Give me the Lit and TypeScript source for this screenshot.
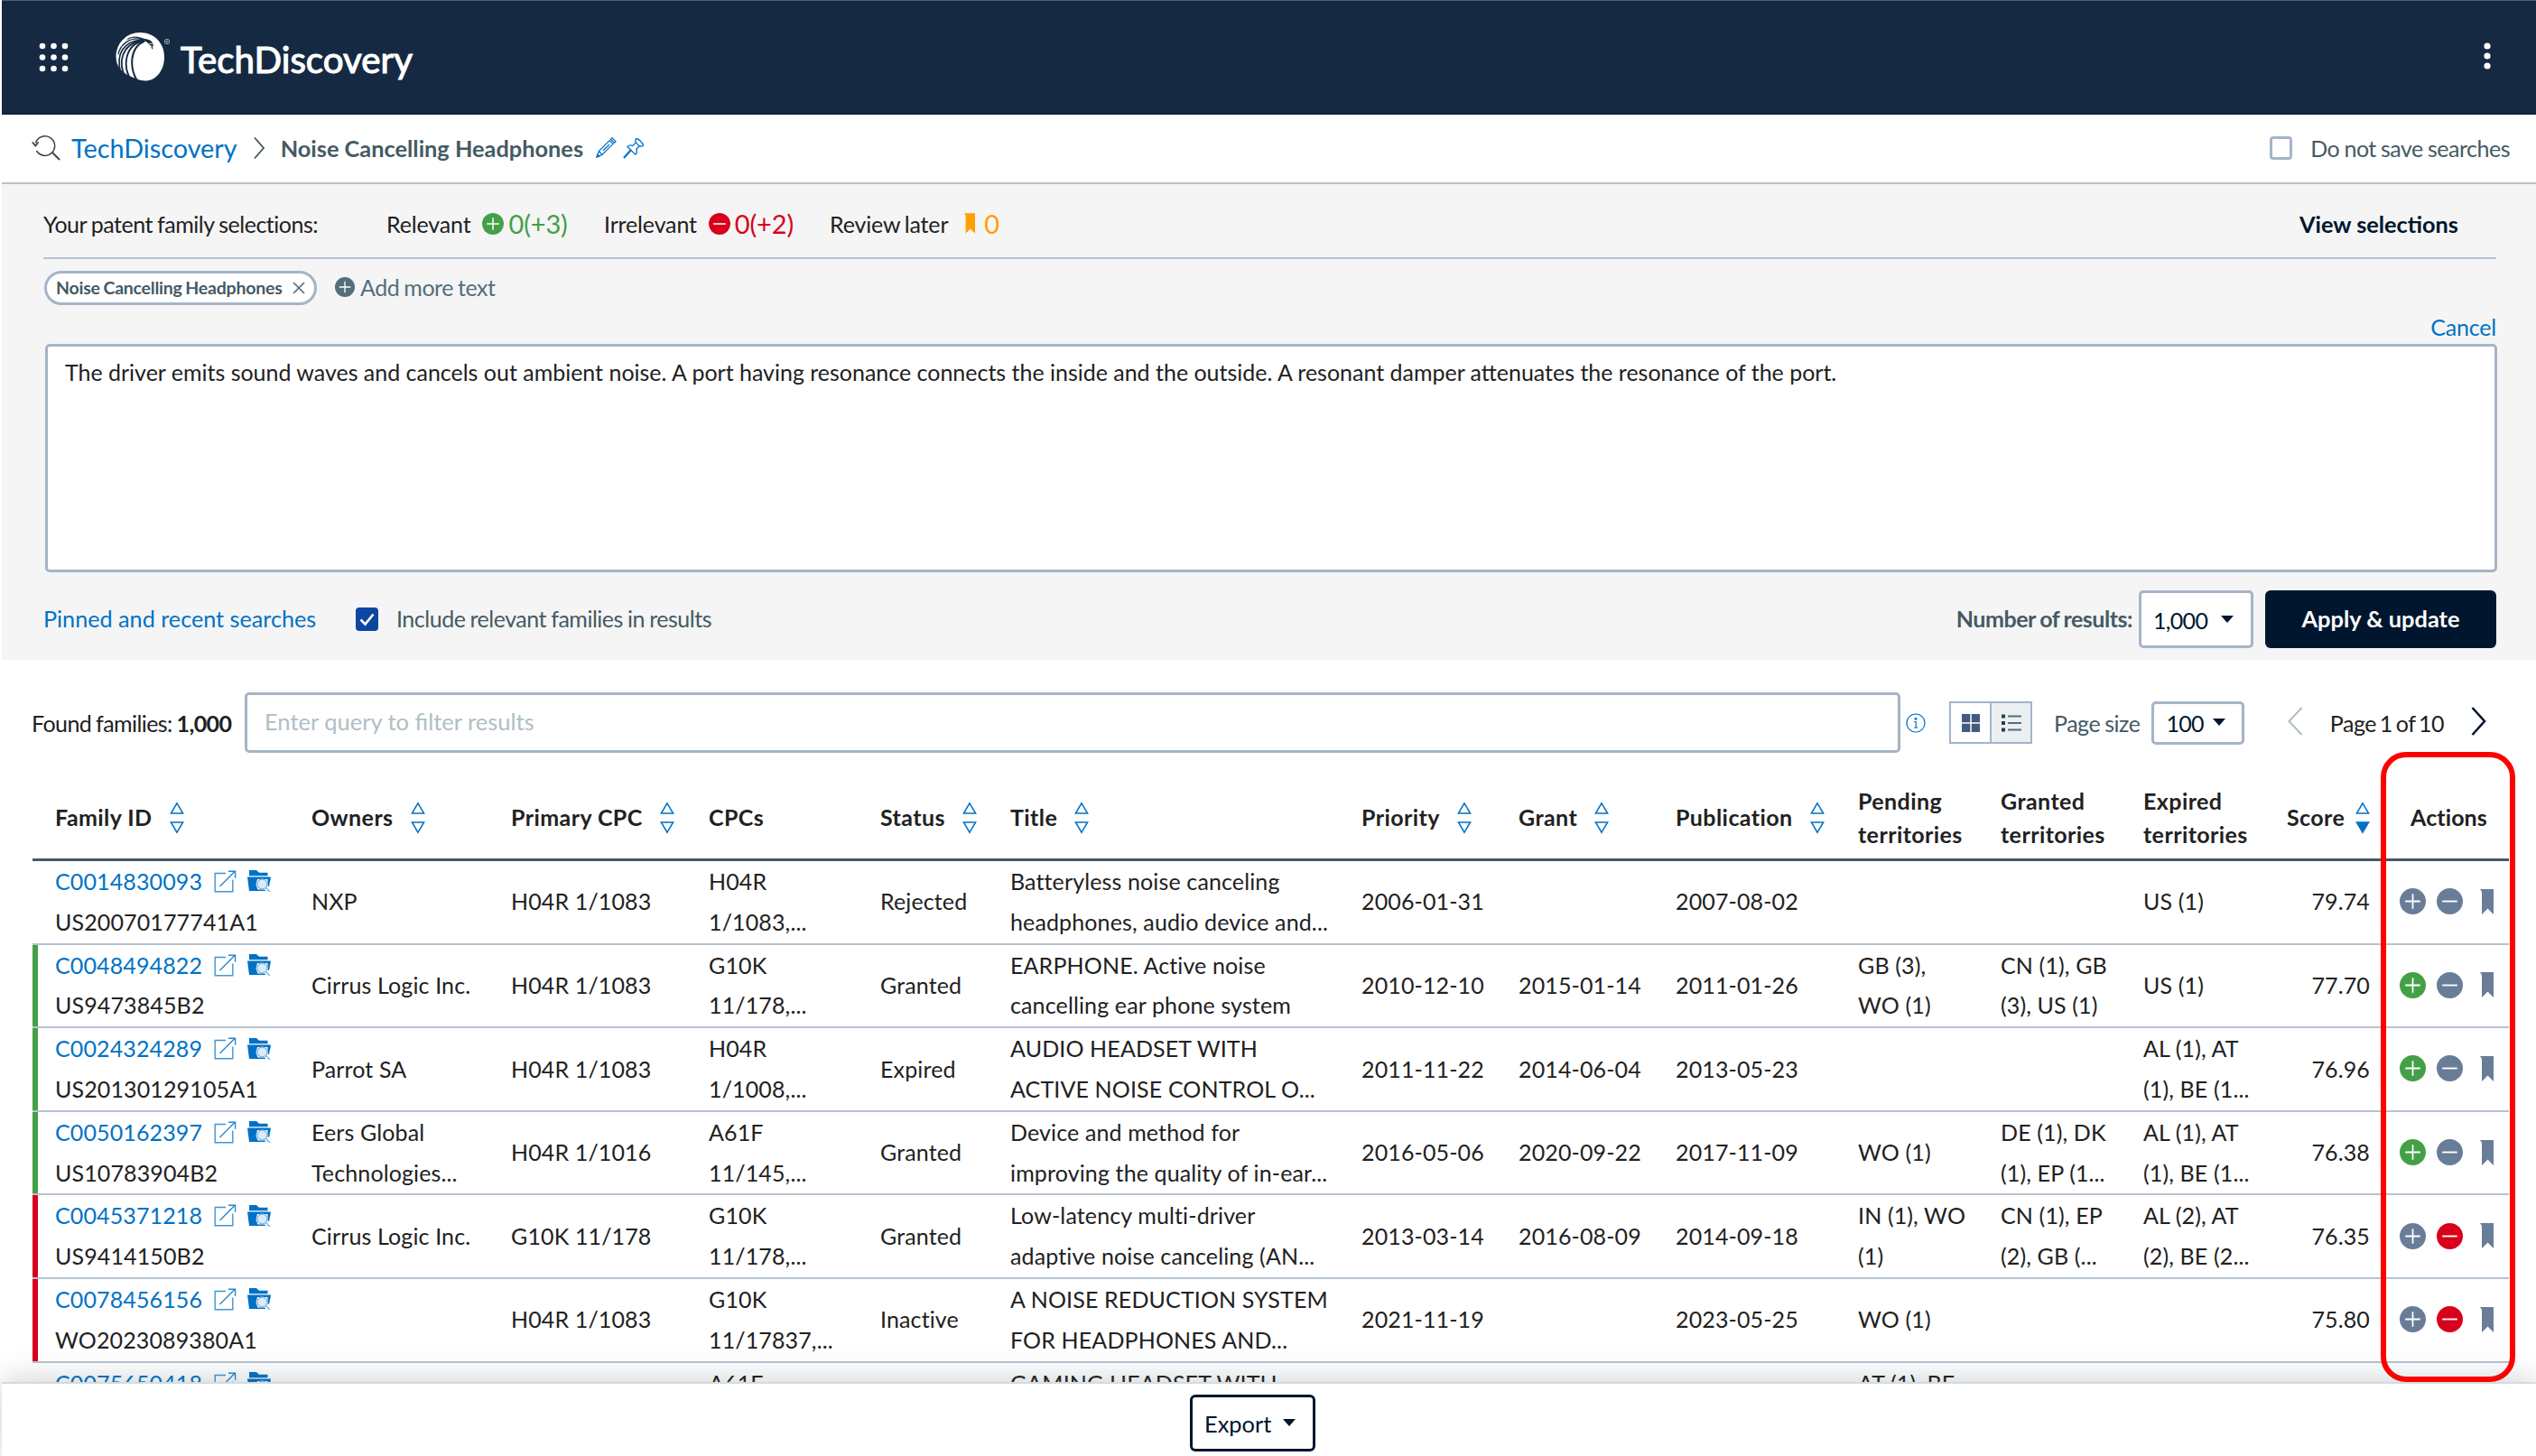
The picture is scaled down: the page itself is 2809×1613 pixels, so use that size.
import { LitElement, html, svg, css, nothing } from 'lit';
import { customElement, property } from 'lit/decorators.js';
import { classMap } from 'lit/directives/class-map.js';

type Mark = '' | 'relevant' | 'irrelevant';

interface Family {
  id: string;
  doc: string;
  owners: string[];
  primary: string;
  cpcs: string[];
  status: string;
  title: string[];
  priority: string;
  grant: string;
  publication: string;
  pending: string[];
  granted: string[];
  expired: string[];
  score: string;
  mark: Mark;
}

interface Column {
  label: string[];
  sort?: 'none' | 'desc';
}

const columns: Column[] = [
  { label: ['Family ID'], sort: 'none' },
  { label: ['Owners'], sort: 'none' },
  { label: ['Primary CPC'], sort: 'none' },
  { label: ['CPCs'] },
  { label: ['Status'], sort: 'none' },
  { label: ['Title'], sort: 'none' },
  { label: ['Priority'], sort: 'none' },
  { label: ['Grant'], sort: 'none' },
  { label: ['Publication'], sort: 'none' },
  { label: ['Pending', 'territories'] },
  { label: ['Granted', 'territories'] },
  { label: ['Expired', 'territories'] },
  { label: ['Score'], sort: 'desc' },
  { label: ['Actions'] },
];

const families: Family[] = [
  {
    id: 'C0014830093', doc: 'US20070177741A1', owners: ['NXP'], primary: 'H04R 1/1083',
    cpcs: ['H04R', '1/1083,...'], status: 'Rejected',
    title: ['Batteryless noise canceling', 'headphones, audio device and...'],
    priority: '2006-01-31', grant: '', publication: '2007-08-02',
    pending: [], granted: [], expired: ['US (1)'], score: '79.74', mark: '',
  },
  {
    id: 'C0048494822', doc: 'US9473845B2', owners: ['Cirrus Logic Inc.'], primary: 'H04R 1/1083',
    cpcs: ['G10K', '11/178,...'], status: 'Granted',
    title: ['EARPHONE. Active noise', 'cancelling ear phone system'],
    priority: '2010-12-10', grant: '2015-01-14', publication: '2011-01-26',
    pending: ['GB (3),', 'WO (1)'], granted: ['CN (1), GB', '(3), US (1)'], expired: ['US (1)'],
    score: '77.70', mark: 'relevant',
  },
  {
    id: 'C0024324289', doc: 'US20130129105A1', owners: ['Parrot SA'], primary: 'H04R 1/1083',
    cpcs: ['H04R', '1/1008,...'], status: 'Expired',
    title: ['AUDIO HEADSET WITH', 'ACTIVE NOISE CONTROL O...'],
    priority: '2011-11-22', grant: '2014-06-04', publication: '2013-05-23',
    pending: [], granted: [], expired: ['AL (1), AT', '(1), BE (1...'], score: '76.96', mark: 'relevant',
  },
  {
    id: 'C0050162397', doc: 'US10783904B2', owners: ['Eers Global', 'Technologies...'], primary: 'H04R 1/1016',
    cpcs: ['A61F', '11/145,...'], status: 'Granted',
    title: ['Device and method for', 'improving the quality of in-ear...'],
    priority: '2016-05-06', grant: '2020-09-22', publication: '2017-11-09',
    pending: ['WO (1)'], granted: ['DE (1), DK', '(1), EP (1...'], expired: ['AL (1), AT', '(1), BE (1...'],
    score: '76.38', mark: 'relevant',
  },
  {
    id: 'C0045371218', doc: 'US9414150B2', owners: ['Cirrus Logic Inc.'], primary: 'G10K 11/178',
    cpcs: ['G10K', '11/178,...'], status: 'Granted',
    title: ['Low-latency multi-driver', 'adaptive noise canceling (AN...'],
    priority: '2013-03-14', grant: '2016-08-09', publication: '2014-09-18',
    pending: ['IN (1), WO', '(1)'], granted: ['CN (1), EP', '(2), GB (...'], expired: ['AL (2), AT', '(2), BE (2...'],
    score: '76.35', mark: 'irrelevant',
  },
  {
    id: 'C0078456156', doc: 'WO2023089380A1', owners: [], primary: 'H04R 1/1083',
    cpcs: ['G10K', '11/17837,...'], status: 'Inactive',
    title: ['A NOISE REDUCTION SYSTEM', 'FOR HEADPHONES AND...'],
    priority: '2021-11-19', grant: '', publication: '2023-05-25',
    pending: ['WO (1)'], granted: [], expired: [], score: '75.80', mark: 'irrelevant',
  },
  {
    id: 'C0075650418', doc: '', owners: [], primary: '',
    cpcs: ['A61F', ''], status: '',
    title: ['GAMING HEADSET WITH', ''],
    priority: '', grant: '', publication: '',
    pending: ['AT (1), BE', ''], granted: [], expired: [], score: '', mark: '',
  },
];

const plusIcon = html`<svg viewBox="0 0 28 28"><circle cx="14" cy="14" r="14" fill="currentColor"/><path d="M14 6v16M6 14h16" stroke="#fff" stroke-width="1.7" fill="none"/></svg>`;
const minusIcon = html`<svg viewBox="0 0 28 28"><circle cx="14" cy="14" r="14" fill="currentColor"/><path d="M6 14h16" stroke="#fff" stroke-width="1.8" fill="none"/></svg>`;
const bookmarkIcon = html`<svg viewBox="0 0 15 28"><path d="M0 0h15v28l-6.5-6.5L2 28V3z" fill="currentColor"/></svg>`;
const externalIcon = html`<svg viewBox="0 0 25 25" fill="none" stroke="currentColor"><path d="M13 3.5H1.2v20.3h19.6V10.5" stroke-width="1.4" opacity=".75"/><path d="M6.5 18 23 1.5M16 1.2h7.6v7.6" stroke-width="1.4" opacity=".85"/></svg>`;
const folderIcon = html`
  <svg viewBox="0 0 26 24">
    <path d="M2 0h8l3 2.8h9.5v3.4H2z" fill="currentColor"/>
    <path d="M0 7.5h26l-1 5-2-2.5H11L9.5 16l2.5 7H2z" fill="currentColor"/>
    <path d="M22.5 9.5h3l-1.5 9-1.5-2z" fill="currentColor"/>
    <path d="M11 21.5h8l1.5 1.5H11z" fill="currentColor"/>
    <circle cx="16.5" cy="15.5" r="5.5" fill="#dcebf7" stroke="#7fb5df" stroke-width="1.3"/>
    <path d="M20.5 19.5 25 24" stroke="#7fb5df" stroke-width="1.5"/>
  </svg>`;

@customElement('sort-arrows')
export class SortArrows extends LitElement {
  @property() direction = 'none';

  static styles = css`
    :host {
      display: block;
      flex: none;
      width: 16px;
      height: 36px;
      color: #0072c6;
    }
    svg {
      display: block;
      width: 16px;
      height: 36px;
    }
  `;

  render() {
    return html`
      <svg viewBox="0 0 16 36" fill="none" stroke="currentColor" stroke-width="1.5">
        <path d="M8 1.8 14.6 13H1.4z"/>
        ${svg`<path d="M8 34.2 14.6 23H1.4z" fill=${this.direction === 'desc' ? 'currentColor' : 'none'}/>`}
      </svg>
    `;
  }
}

@customElement('app-root')
export class AppRoot extends LitElement {
  static styles = css`
    :host {
      box-sizing: border-box;
      display: flex;
      flex-direction: column;
      position: relative;
      width: 2809px;
      height: 1613px;
      padding-left: 2px;
      overflow: hidden;
      background: #fff;
      color: #212121;
      font-family: Lato, 'Liberation Sans', sans-serif;
      font-size: 25px;
      line-height: 30px;
      white-space: nowrap;
    }
    * {
      box-sizing: border-box;
    }
    svg {
      display: block;
      flex: none;
      width: 100%;
      height: 100%;
    }
    .bar {
      display: flex;
      align-items: center;
      flex: none;
    }
    .push {
      margin-left: auto;
    }
    .icon {
      flex: none;
    }
    .tight {
      letter-spacing: -0.48px;
      word-spacing: -0.8px;
    }

    .top {
      height: 127px;
      padding: 0 50px 0 41px;
      background: #152a42;
      border-top: 1px solid #4a6076;
      border-bottom: 2px solid #06213d;
      color: #fff;
    }
    .apps {
      width: 33px;
      height: 33px;
    }
    .logo {
      width: 62px;
      height: 54px;
      margin-left: 52px;
    }
    .brand {
      margin: 5px 0 0 10px;
      font-size: 40.3px;
      line-height: 48px;
      -webkit-text-stroke: 1.1px #fff;
    }
    .kebab {
      width: 8px;
      height: 30px;
      margin-bottom: 2px;
    }

    .crumbs {
      height: 77px;
      padding: 0 29px 2px 33px;
      border-bottom: 2px solid #b6c3d0;
      color: #455a64;
    }
    .search {
      width: 32px;
      height: 30px;
      color: #424242;
    }
    .home {
      margin-left: 12px;
      font-size: 28.8px;
      color: #0072c6;
    }
    .chevron {
      width: 12px;
      height: 26px;
      margin-left: 18px;
    }
    .current {
      margin-left: 18px;
      font-size: 25.35px;
      font-weight: 700;
    }
    .pencil {
      width: 23px;
      height: 23px;
      margin-left: 14px;
      color: #0072c6;
    }
    .pin {
      width: 24px;
      height: 24px;
      margin-left: 7px;
      color: #0072c6;
    }
    .check {
      flex: none;
      width: 25px;
      height: 26px;
      border: 3px solid #a5b4c8;
      border-radius: 4px;
      background: #fff;
    }
    .check.on {
      border: none;
      background: #0d47a1;
    }

    .query {
      flex: none;
      display: flex;
      flex-direction: column;
      height: 527px;
      padding: 0 44px 0 46px;
      background: #f5f5f5;
    }
    .selections {
      height: 83px;
      padding-top: 6px;
      border-bottom: 2px solid #b6c3d0;
    }
    .intro {
      width: 380px;
    }
    .tally {
      display: flex;
      align-items: center;
      letter-spacing: -0.15px;
      word-spacing: -1.5px;
    }
    .rel {
      width: 241px;
    }
    .irr {
      width: 250px;
    }
    .tally .icon {
      width: 24px;
      height: 24px;
      margin-left: 13px;
    }
    .tally .icon.flag {
      width: 12px;
      height: 23px;
      margin-left: 18px;
    }
    .count {
      margin-left: 5px;
      font-size: 29px;
    }
    .flag + .count {
      margin-left: 10px;
    }
    .green {
      color: #43a047;
    }
    .red {
      color: #d9001b;
    }
    .orange {
      color: #ffa000;
    }
    .view {
      margin-right: 42px;
      font-size: 25.3px;
      font-weight: 700;
      color: #00162e;
    }
    .texts {
      height: 62px;
      margin-top: 1px;
    }
    .chip {
      display: flex;
      align-items: center;
      justify-content: space-between;
      width: 302px;
      height: 38px;
      margin-left: 1px;
      padding: 0 10px 1px;
      border: 3px solid #a5b4c8;
      border-radius: 19px;
      background: #fff;
      font-size: 19.5px;
      font-weight: 700;
      letter-spacing: -0.22px;
      word-spacing: -0.8px;
      color: #455a64;
    }
    .chip .icon {
      width: 14px;
      height: 14px;
    }
    .more {
      display: flex;
      align-items: center;
      margin: 0 0 3px 20px;
      color: #546e7a;
    }
    .more .icon {
      width: 22px;
      height: 22px;
      margin-right: 6px;
    }
    .cancel {
      align-self: flex-end;
      height: 34px;
      margin-top: -3px;
      color: #0072c6;
      letter-spacing: -0.2px;
    }
    .text {
      height: 253px;
      margin: 0 -1px 0 2px;
      padding: 13px 19px;
      border: 3px solid #a5b4c8;
      border-radius: 5px;
      background: #fff;
      font-size: 24.97px;
    }
    .controls {
      height: 64px;
      margin-top: 20px;
      color: #455a64;
    }
    .controls > .label {
      padding-bottom: 2px;
    }
    .pinned {
      width: 346px;
      font-size: 25.2px;
      color: #0072c6;
    }
    .include {
      margin-left: 20px;
    }
    .bold {
      font-weight: 700;
    }
    .select {
      display: flex;
      align-items: center;
      justify-content: space-between;
      flex: none;
      padding: 0 19px 0 13px;
      border: 3px solid #a5b4c8;
      border-radius: 5px;
      background: #fff;
      color: #00162e;
      letter-spacing: -0.7px;
    }
    .caret {
      width: 0;
      height: 0;
      margin-bottom: 2px;
      border: 7px solid transparent;
      border-top: 8px solid #00162e;
      border-bottom: none;
    }
    .results {
      width: 127px;
      height: 64px;
      margin-left: 7px;
      padding-top: 2px;
    }
    .apply {
      display: flex;
      align-items: center;
      justify-content: center;
      width: 256px;
      height: 64px;
      margin-left: 13px;
      padding-bottom: 2px;
      border-radius: 6px;
      background: #00162e;
      color: #fff;
      font-size: 25.4px;
      font-weight: 700;
    }

    .filters {
      height: 67px;
      margin-top: 36px;
      padding: 0 55px 0 33px;
    }
    .found {
      width: 236px;
      padding-top: 1px;
      letter-spacing: -0.58px;
      word-spacing: -1px;
    }
    .filter {
      display: flex;
      align-items: center;
      width: 1834px;
      height: 67px;
      padding: 0 19px 3px;
      border: 3px solid #a5b4c8;
      border-radius: 5px;
      color: #b0bec5;
      font-size: 25.5px;
    }
    .info {
      width: 22px;
      height: 22px;
      margin-left: 6px;
      color: #0072c6;
    }
    .views {
      display: flex;
      width: 92px;
      height: 47px;
      margin-left: 26px;
      border: 2px solid #a5b4c8;
    }
    .views div {
      flex: 1;
      display: flex;
      align-items: center;
      justify-content: center;
    }
    .views .active {
      border-left: 2px solid #a5b4c8;
      background: #eceff1;
    }
    .views svg {
      width: 22px;
      height: 22px;
    }
    .size-label {
      margin-left: 24px;
      padding-top: 1px;
      color: #455a64;
    }
    .size {
      width: 103px;
      height: 48px;
      margin-left: 13px;
      padding-right: 18px;
    }
    .arrow {
      width: 17px;
      height: 32px;
      margin-bottom: 3px;
    }
    .page {
      margin: 1px 30px 0;
      word-spacing: -2px;
    }

    .table {
      flex: none;
      display: flex;
      flex-direction: column;
      width: 2743px;
      margin-left: 34px;
      letter-spacing: 0.13px;
    }
    .row {
      display: grid;
      grid-template-columns: 284px 221px 219px 190px 144px 389px 174px 174px 202px 158px 158px 159px 92px 1fr;
      align-items: center;
      flex: 1;
      height: 90.6px;
      padding: 0 0 1px 19px;
      line-height: 44.7px;
    }
    .head {
      flex: none;
      height: 120px;
      padding: 26px 0 0 25px;
      border-bottom: 3px solid #455a64;
      font-weight: 700;
      line-height: 37px;
      letter-spacing: 0.42px;
    }
    .head .last {
      padding-left: 45px;
      letter-spacing: 0.1px;
    }
    .item {
      display: flex;
      height: 92.6px;
      border-bottom: 2px solid #b6c3d0;
    }
    .stripe {
      flex: none;
      width: 6px;
    }
    .stripe.relevant {
      background: #43a047;
    }
    .stripe.irrelevant {
      background: #d9001b;
    }
    .cell {
      min-width: 0;
    }
    .th {
      display: flex;
      align-items: center;
      gap: 19px;
    }
    .id {
      display: flex;
      align-items: center;
      color: #0072c6;
    }
    .id .ext {
      width: 25px;
      height: 25px;
      margin-left: 13px;
    }
    .id .folder {
      width: 26px;
      height: 24px;
      margin-left: 12px;
    }
    .score {
      text-align: right;
    }
    .actions {
      display: flex;
      align-items: center;
      margin-left: 33px;
      color: #697d98;
    }
    .actions .icon {
      width: 29px;
      height: 29px;
      margin-right: 12px;
    }
    .actions .flag {
      width: 15px;
      height: 28px;
      margin: 0 0 0 7px;
    }

    .highlight {
      position: absolute;
      left: 2637px;
      top: 833px;
      width: 149px;
      height: 698px;
      border: 6.5px solid #f00;
      border-radius: 28px;
    }
    .footer {
      position: absolute;
      left: 2px;
      right: 0;
      bottom: 0;
      height: 82px;
      display: flex;
      justify-content: center;
      padding: 12px 36px 0 0;
      border-top: 2px solid #d3dce2;
      background: #fff;
      box-shadow: 0 0 36px rgba(55, 71, 79, 0.28);
    }
    .export {
      display: flex;
      align-items: center;
      justify-content: space-between;
      width: 139px;
      height: 63px;
      padding: 0 19px 0 13px;
      border: 3px solid #00162e;
      border-radius: 6px;
      color: #00162e;
      font-size: 25.4px;
    }
  `;

  private lines(lines: string[]) {
    return html`<div class="cell">${lines.map((line) => html`<div>${line || html`&nbsp;`}</div>`)}</div>`;
  }

  private renderHeader() {
    const dots = [4, 16.5, 29];
    return html`
      <header class="bar top">
        <div class="icon apps">
          <svg viewBox="0 0 33 33" fill="#fff">
            ${dots.map((y) => dots.map((x) => svg`<circle cx=${x} cy=${y} r="3.3"/>`))}
          </svg>
        </div>
        <div class="icon logo">
          <svg viewBox="0 0 62 54">
            <path d="M27 0C42 0 54 11 54 27c0 15-9 26-20 26.5-3 .2-9-1-14-3.5C8 46 .5 38 .5 27 .5 12 12 0 27 0z" fill="#fff"/>
            <g fill="none" stroke="#152a42">
              <path d="M32 9.5C15 17 15 40 25 55" stroke-width="2"/>
              <path d="M31 9C10 14 7 38 18 54" stroke-width="1.9"/>
              <path d="M30 8.5C6 13 2 34 11.5 51" stroke-width="1.8"/>
              <path d="M29 8C8 10 .5 24 5.5 44" stroke-width="1.6"/>
              <path d="M27 7C14 6 5 14 3 24" stroke-width="1.3"/>
              <path d="M13 7.5C20 3 27 5 34 9" stroke-width="1.3"/>
            </g>
            <path d="M26 6.5c5 0 9 .5 13 2.5l3 4-1 6-3-5-4-4-6-1z" fill="#152a42"/>
            <path d="M37 12l5 1M38 14.5l4 2" stroke="#fff" stroke-width=".8"/>
            <circle cx="57" cy="10" r="2.6" fill="#152a42" stroke="#a9b4c0" stroke-width="1"/>
            <circle cx="57" cy="10" r="1" fill="#a9b4c0"/>
          </svg>
        </div>
        <div class="brand">TechDiscovery</div>
        <div class="icon kebab push">
          <svg viewBox="0 0 8 30" fill="#fff"><circle cx="4" cy="4" r="3.6"/><circle cx="4" cy="15" r="3.6"/><circle cx="4" cy="26" r="3.6"/></svg>
        </div>
      </header>
    `;
  }

  private renderCrumbs() {
    return html`
      <nav class="bar crumbs">
        <div class="icon search">
          <svg viewBox="0 0 32 30" fill="none" stroke="currentColor" stroke-width="1.5">
            <path d="M4.5 9.5A10.8 10.8 0 1 1 5.5 18"/><path d="M22.5 19.5 31 28" stroke-width="2"/><path d="M.8 8.5 4.3 12.5 7.5 8.5" stroke-width="1.8"/>
          </svg>
        </div>
        <div class="home">TechDiscovery</div>
        <div class="icon chevron"><svg viewBox="0 0 12 26" fill="none" stroke="currentColor" stroke-width="1.9"><path d="M1 1.5 11 13 1 24.5"/></svg></div>
        <div class="current">Noise Cancelling Headphones</div>
        <div class="icon pencil">
          <svg viewBox="0 0 23 23" fill="none" stroke="currentColor" stroke-width="1.2">
            <path d="M1 22 3.2 15.5 15.2 3.5l3.8 3.8L7 19.5z"/><path d="M16.5 2.2 18 .8 22 4.8 20.5 6.3zM3.2 15.5 7 19.5M15 8 8 15"/><path d="M1 22l1-3 2 2z" fill="currentColor"/>
          </svg>
        </div>
        <div class="icon pin">
          <svg viewBox="0 0 24 24" fill="none" stroke="currentColor" stroke-width="1.3">
            <path d="M14.5 1.5c3 .3 7.5 4.5 8 8-1.5 1-3 .8-4.2.2l-3.5 3.5c1 2.3.5 4.5-1 6L5 10.5c1.5-1.5 3.7-2 6-1l3.3-3.5c-.8-1.5-.8-3 .2-4.5z"/>
            <path d="M14.5 6c1 1.5 2.3 2.8 4 3.7"/><path d="M9 14 1 23" stroke-width="2.2"/>
          </svg>
        </div>
        <div class="check push"></div>
        <div class="include tight">Do not save searches</div>
      </nav>
    `;
  }

  private renderQuery() {
    return html`
      <section class="query">
        <div class="bar selections">
          <div class="intro tight">Your patent family selections:</div>
          <div class="tally rel">Relevant<div class="icon green">${plusIcon}</div><div class="count green">0(+3)</div></div>
          <div class="tally irr">Irrelevant<div class="icon red">${minusIcon}</div><div class="count red">0(+2)</div></div>
          <div class="tally">Review later<div class="icon flag orange">${bookmarkIcon}</div><div class="count orange">0</div></div>
          <div class="view push">View selections</div>
        </div>
        <div class="bar texts">
          <div class="chip">
            Noise Cancelling Headphones
            <div class="icon"><svg viewBox="0 0 14 14" stroke="#546e7a" stroke-width="1.7"><path d="M1 1 13 13M13 1 1 13"/></svg></div>
          </div>
          <div class="more tight"><div class="icon">${plusIcon}</div>Add more text</div>
        </div>
        <div class="cancel">Cancel</div>
        <div class="text">The driver emits sound waves and cancels out ambient noise. A port having resonance connects the inside and the outside. A resonant damper attenuates the resonance of the port.</div>
        <div class="bar controls">
          <div class="label pinned">Pinned and recent searches</div>
          <div class="check on"><svg viewBox="0 0 25 26" fill="none" stroke="#fff" stroke-width="2.6"><path d="M5.5 13.5 10.5 18.5 19.5 7.5"/></svg></div>
          <div class="label include tight">Include relevant families in results</div>
          <div class="label bold tight push">Number of results:</div>
          <div class="select results">1,000<div class="caret"></div></div>
          <div class="apply">Apply &amp; update</div>
        </div>
      </section>
    `;
  }

  private renderFilters() {
    return html`
      <section class="bar filters">
        <div class="found">Found families: <span class="bold">1,000</span></div>
        <div class="filter">Enter query to filter results</div>
        <div class="icon info">
          <svg viewBox="0 0 22 22" fill="none" stroke="currentColor" stroke-width="1.2"><circle cx="11" cy="11" r="10"/><path d="M9.2 9.5h2V16M9 16h4.4"/><circle cx="11" cy="6.2" r=".9" fill="currentColor"/></svg>
        </div>
        <div class="views">
          <div><svg viewBox="0 0 22 22" fill="#465a7d"><path d="M1 1h9.3v9.3H1zM11.8 1H21v9.3h-9.2zM1 11.8h9.3V21H1zM11.8 11.8H21V21h-9.2z"/></svg></div>
          <div class="active"><svg viewBox="0 0 22 22" fill="#263d52"><path d="M0 1.5h4v4H0zM0 9h4v4H0zM0 16.5h4v4H0z"/><path d="M7 2.5h15.5v2H7zM7 10h15.5v2H7zM7 17.5h15.5v2H7z" fill="#546e7a"/></svg></div>
        </div>
        <div class="size-label tight">Page size</div>
        <div class="select size">100<div class="caret"></div></div>
        <div class="icon arrow push"><svg viewBox="0 0 17 32" fill="none" stroke="#b0bec5" stroke-width="2"><path d="M15.5 1 1.5 16l14 15"/></svg></div>
        <div class="tight page">Page 1 of 10</div>
        <div class="icon arrow"><svg viewBox="0 0 17 32" fill="none" stroke="#00162e" stroke-width="2.6"><path d="M1.5 1 15 16 1.5 31"/></svg></div>
      </section>
    `;
  }

  private renderRow(f: Family) {
    return html`
      <div class="item">
        <div class=${classMap({ stripe: true, relevant: f.mark === 'relevant', irrelevant: f.mark === 'irrelevant' })}></div>
        <div class="row">
          <div class="cell">
            <div class="id">${f.id}<div class="icon ext">${externalIcon}</div><div class="icon folder">${folderIcon}</div></div>
            <div>${f.doc || html`&nbsp;`}</div>
          </div>
          ${this.lines(f.owners)}
          <div class="cell">${f.primary}</div>
          ${this.lines(f.cpcs)}
          <div class="cell">${f.status}</div>
          ${this.lines(f.title)}
          <div class="cell">${f.priority}</div>
          <div class="cell">${f.grant}</div>
          <div class="cell">${f.publication}</div>
          ${this.lines(f.pending)}
          ${this.lines(f.granted)}
          ${this.lines(f.expired)}
          <div class="cell score">${f.score}</div>
          ${f.score ? html`
            <div class="actions">
              <div class=${classMap({ icon: true, green: f.mark === 'relevant' })}>${plusIcon}</div>
              <div class=${classMap({ icon: true, red: f.mark === 'irrelevant' })}>${minusIcon}</div>
              <div class="icon flag">${bookmarkIcon}</div>
            </div>` : nothing}
        </div>
      </div>
    `;
  }

  render() {
    return html`
      ${this.renderHeader()}
      ${this.renderCrumbs()}
      ${this.renderQuery()}
      ${this.renderFilters()}
      <section class="table">
        <div class="row head">
          ${columns.map((col, i) => html`
            <div class=${classMap({ th: true, last: i === columns.length - 1 })}>
              ${this.lines(col.label)}
              ${col.sort ? html`<sort-arrows direction=${col.sort}></sort-arrows>` : nothing}
            </div>`)}
        </div>
        ${families.map((f) => this.renderRow(f))}
      </section>
      <footer class="footer">
        <div class="export">Export<div class="caret"></div></div>
      </footer>
      <div class="highlight"></div>
    `;
  }
}
